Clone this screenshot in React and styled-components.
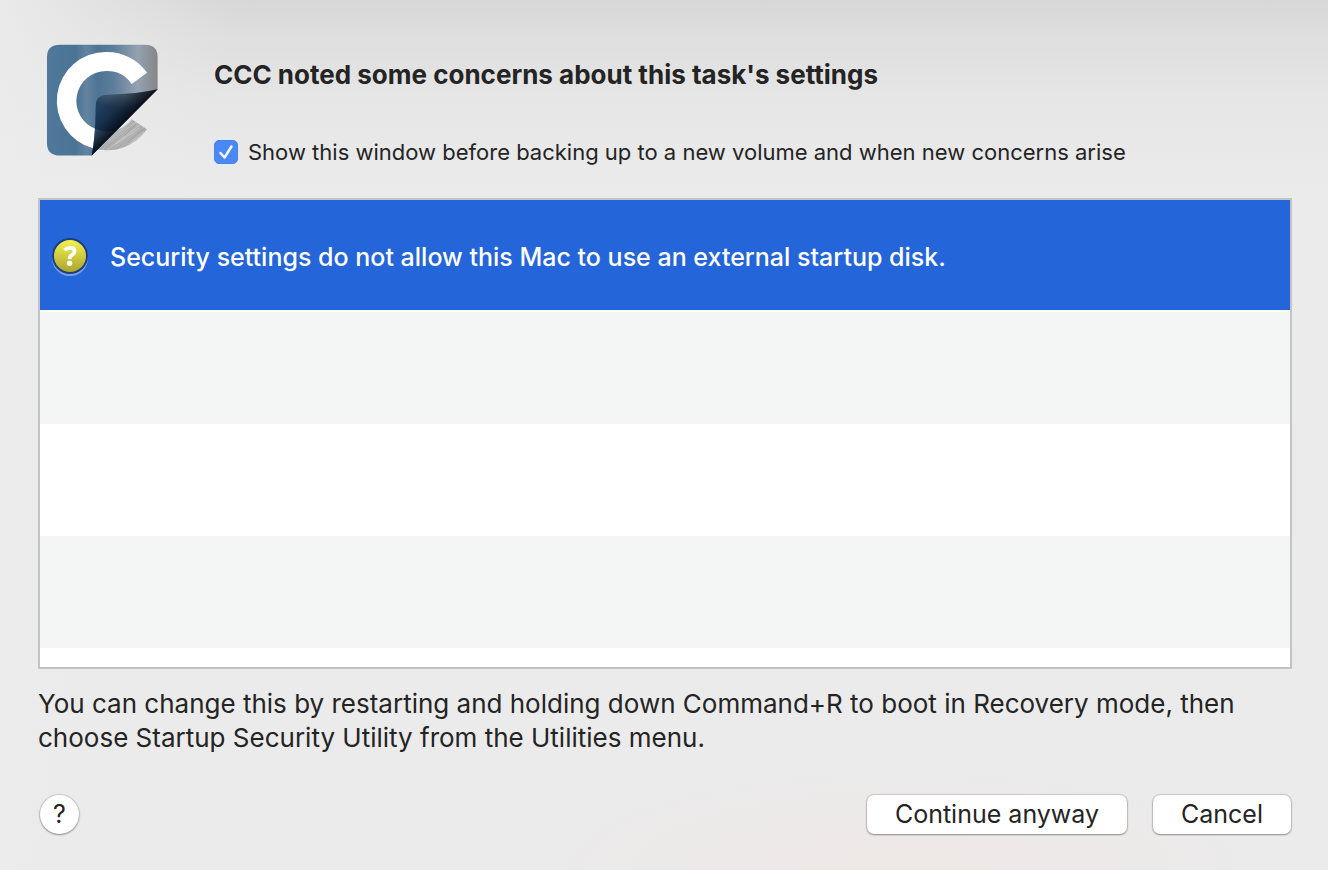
import React from "react";
import styled, { createGlobalStyle } from "styled-components";

const GlobalStyle = createGlobalStyle`
  *, *::before, *::after { box-sizing: border-box; }
  html, body { margin: 0; min-height: 100%; }
  body {
    background-color: #ebebeb;
    color: #242424;
    font-family: Inter, "Liberation Sans", sans-serif;
  }
`;

const Dialog = styled.main`
  min-height: 100vh;
  display: flex;
  flex-direction: column;
  padding: 44px 36px 36px 38px;
  background:
    radial-gradient(ellipse 380px 110px at 68% 100%, rgba(240, 230, 228, 0.7), rgba(240, 230, 228, 0)),
    linear-gradient(100deg, rgba(236, 236, 236, 0.9), rgba(236, 236, 236, 0) 16%),
    linear-gradient(180deg, #d7d7d7 0, #dfdfdf 40px, #e6e6e6 100px, #ebebeb 190px);
`;

const Header = styled.header`
  display: flex;
  gap: 56px;
  padding-left: 8px;
  margin-bottom: 30px;
`;

const AppIcon = styled.svg`
  flex: none;
  width: 112px;
  height: 112px;
`;

const Heading = styled.div`
  display: flex;
  flex-direction: column;
  gap: 44px;
  padding-top: 14px;
`;

const Title = styled.h1`
  margin: 0;
  font-size: 26px;
  line-height: 34px;
  font-weight: 700;
`;

const CheckLabel = styled.label`
  display: flex;
  align-items: center;
  gap: 10px;
  font-size: 22px;
  line-height: 32px;
`;

const CheckBox = styled.span`
  display: grid;
  width: 24px;
  height: 24px;
  > * { grid-area: 1 / 1; }
  svg { pointer-events: none; }
`;

const CheckInput = styled.input`
  appearance: none;
  width: 24px;
  height: 24px;
  margin: 0;
  border-radius: 5px;
  border: 1px solid #b9b9b9;
  background: #fff;
  &:checked {
    border-color: #4583ee;
    background: #4a88f6;
  }
  &:not(:checked) + svg { display: none; }
`;

const ConcernList = styled.ul`
  flex: 1;
  display: flex;
  flex-direction: column;
  min-height: 470px;
  margin: 0 0 18px;
  padding: 0;
  list-style: none;
  border: 2px solid #c3c3c3;
  background: repeating-linear-gradient(#fff 0 112px, #f4f5f5 112px 224px);
`;

const Concern = styled.li`
  display: flex;
  align-items: center;
  gap: 20px;
  height: 110px;
  padding: 4px 10px 0;
  font-size: 25px;
  line-height: 34px;
  font-weight: 500;
  color: ${(p) => (p.$selected ? "#fff" : "#242424")};
  background: ${(p) => (p.$selected ? "#2465d9" : "transparent")};
`;

const BadgeIcon = styled.svg`
  flex: none;
  width: 40px;
  height: 40px;
`;

const Advice = styled.p`
  margin: 0 0 40px;
  font-size: 26px;
  line-height: 34px;
`;

const Footer = styled.footer`
  display: flex;
  align-items: center;
  gap: 26px;
  padding: 0 1px 0 2px;
`;

const Button = styled.button`
  height: 39px;
  padding: 0 28px;
  border: 0;
  border-radius: 7px;
  background: #fff;
  color: #242424;
  font: inherit;
  font-size: 25px;
  line-height: 39px;
  box-shadow: 0 0 1px 1px rgba(0, 0, 0, 0.14), 0 1px 2px rgba(0, 0, 0, 0.3);
`;

const HelpButton = styled(Button)`
  width: 39px;
  padding: 0;
  margin-right: auto;
  border-radius: 50%;
`;

function Logo() {
  return (
    <AppIcon viewBox="0 0 112 112" aria-hidden="true">
      <defs>
        <linearGradient id="page" x1="0" x2="1" y1="0" y2="0">
          <stop offset="0" stopColor="#50789a" />
          <stop offset="0.26" stopColor="#4b7394" />
          <stop offset="0.36" stopColor="#6384a0" />
          <stop offset="0.46" stopColor="#4c7495" />
          <stop offset="0.6" stopColor="#5c7d9a" />
          <stop offset="0.82" stopColor="#94a2b1" />
          <stop offset="1" stopColor="#858585" />
        </linearGradient>
        <linearGradient id="curl" gradientUnits="userSpaceOnUse" x1="72" y1="50" x2="62" y2="96">
          <stop offset="0" stopColor="#475a6e" />
          <stop offset="0.3" stopColor="#203f60" />
          <stop offset="0.75" stopColor="#1d4267" />
          <stop offset="1" stopColor="#244868" />
        </linearGradient>
        <linearGradient id="shade" gradientUnits="userSpaceOnUse" x1="58" y1="58" x2="79" y2="79">
          <stop offset="0" stopColor="#060a12" stopOpacity="0" />
          <stop offset="0.45" stopColor="#060a12" stopOpacity="0.3" />
          <stop offset="1" stopColor="#060a12" stopOpacity="0.95" />
        </linearGradient>
        <linearGradient id="metal" x1="0" x2="1" y1="1" y2="0">
          <stop offset="0" stopColor="#a9a9a9" />
          <stop offset="0.6" stopColor="#b4b4b4" />
          <stop offset="1" stopColor="#a2a2a2" />
        </linearGradient>
        <clipPath id="metal-clip">
          <path d="M101 85.3A49 49 0 0 1 46 104L51 85.5A30 30 0 0 0 85.7 75.3Z" />
        </clipPath>
        <clipPath id="curl-clip">
          <path d="M111.6 45.3Q93 50 61.3 50.7Q49.7 51 49.7 62Q49.5 93 45.7 111.6Z" />
        </clipPath>
      </defs>
      <g clipPath="url(#metal-clip)">
        <path d="M40 70H112V112H40Z" fill="url(#metal)" />
        <path
          d="M54 108L90 78M60 107L96 79M66 110L99 82M74 107L103 86M62 98L86 76M70 100L93 84M80 104L98 88"
          stroke="#cacaca"
          strokeWidth="0.8"
        />
        <path d="M58 105L86 82M70 106L97 84M78 92L90 80M82 98L99 84" stroke="#939393" strokeWidth="0.6" />
      </g>
      <path d="M14 .7H99Q111.6 .7 111.6 13V45.3L45.7 111.6H14Q1 111.6 1 99V13Q1 .7 14 .7Z" fill="url(#page)" />
      <path d="M101 28.7A49 49 0 0 0 60 8A49 49 0 0 0 47 104.3L51 85.5A30 30 0 0 1 60.5 27A30 30 0 0 1 85.7 40Z" fill="#fff" />
      <g clipPath="url(#curl-clip)">
        <path d="M44 44H112V112H44Z" fill="url(#curl)" />
        <path d="M44 82Q60 92 76 84L76 112H44Z" fill="#5984a5" fillOpacity="0.55" />
        <path d="M44 103Q52 106 60 106V112H44Z" fill="#1d3f60" fillOpacity="0.5" />
        <path d="M44 44H112V112H44Z" fill="url(#shade)" />
      </g>
    </AppIcon>
  );
}

function QuestionBadge() {
  return (
    <BadgeIcon viewBox="0 0 40 40" aria-hidden="true">
      <defs>
        <linearGradient id="badge" x1="0" x2="0" y1="0" y2="1">
          <stop offset="0" stopColor="#f6f24f" />
          <stop offset="1" stopColor="#aaa52e" />
        </linearGradient>
      </defs>
      <circle cx="20" cy="21" r="18" fill="#7ba3e8" />
      <circle cx="20" cy="19" r="18" fill="#1d3f80" />
      <circle cx="20" cy="19" r="16" fill="url(#badge)" />
      <path d="M14.5 13.2Q17 10.8 20.5 10.8Q24.6 10.8 24.6 14.2Q24.6 16.4 22 17.8Q19.6 19.2 19.6 22" fill="none" stroke="#fff" strokeWidth="3.8" />
      <circle cx="19.6" cy="26.2" r="2.7" fill="#fff" />
    </BadgeIcon>
  );
}

export default function App() {
  return (
    <>
      <GlobalStyle />
      <Dialog>
        <Header>
          <Logo />
          <Heading>
            <Title>CCC noted some concerns about this task's settings</Title>
            <CheckLabel htmlFor="show-window">
              <CheckBox>
                <CheckInput id="show-window" type="checkbox" defaultChecked />
                <svg width="24" height="24" viewBox="0 0 24 24" fill="none" aria-hidden="true">
                  <path d="M6.5 13L10.5 17.5L17.5 6.5" stroke="#fff" strokeWidth="2.4" strokeLinecap="round" strokeLinejoin="round" />
                </svg>
              </CheckBox>
              Show this window before backing up to a new volume and when new concerns arise
            </CheckLabel>
          </Heading>
        </Header>
        <ConcernList>
          <Concern $selected>
            <QuestionBadge />
            Security settings do not allow this Mac to use an external startup disk.
          </Concern>
        </ConcernList>
        <Advice>
          You can change this by restarting and holding down Command+R to boot in Recovery mode, then choose Startup
          Security Utility from the Utilities menu.
        </Advice>
        <Footer>
          <HelpButton type="button" aria-label="Help">?</HelpButton>
          <Button type="button">Continue anyway</Button>
          <Button type="button">Cancel</Button>
        </Footer>
      </Dialog>
    </>
  );
}
